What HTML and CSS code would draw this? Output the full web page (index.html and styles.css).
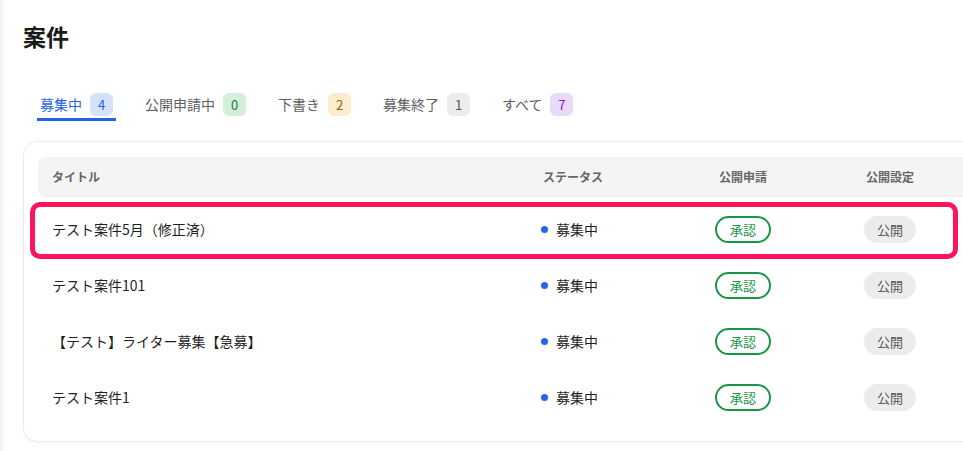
FILE: index.html
```html
<!DOCTYPE html>
<html lang="ja">
<head>
<meta charset="utf-8">
<link rel="stylesheet" href="styles.css">
</head>
<body>
<div class="page">
  <h1 class="title">案件</h1>
  <nav class="tabs">
    <div class="tab active"><span>募集中</span><span class="badge b-blue">4</span></div>
    <div class="tab"><span>公開申請中</span><span class="badge b-green">0</span></div>
    <div class="tab"><span>下書き</span><span class="badge b-orange">2</span></div>
    <div class="tab"><span>募集終了</span><span class="badge b-gray">1</span></div>
    <div class="tab"><span>すべて</span><span class="badge b-purple">7</span></div>
  </nav>
  <div class="card">
    <div class="table">
      <div class="row head">
        <div class="cell">タイトル</div>
        <div class="cell">ステータス</div>
        <div class="cell center">公開申請</div>
        <div class="cell center">公開設定</div>
      </div>
      <div class="row body-row marked">
        <div class="cell">テスト案件5月（修正済）</div>
        <div class="cell status"><span class="dot"></span>募集中</div>
        <div class="cell center"><span class="pill approve">承認</span></div>
        <div class="cell center"><span class="pill public">公開</span></div>
        <div class="highlight"></div>
      </div>
      <div class="row body-row">
        <div class="cell">テスト案件101</div>
        <div class="cell status"><span class="dot"></span>募集中</div>
        <div class="cell center"><span class="pill approve">承認</span></div>
        <div class="cell center"><span class="pill public">公開</span></div>
      </div>
      <div class="row body-row">
        <div class="cell">【テスト】ライター募集【急募】</div>
        <div class="cell status"><span class="dot"></span>募集中</div>
        <div class="cell center"><span class="pill approve">承認</span></div>
        <div class="cell center"><span class="pill public">公開</span></div>
      </div>
      <div class="row body-row">
        <div class="cell">テスト案件1</div>
        <div class="cell status"><span class="dot"></span>募集中</div>
        <div class="cell center"><span class="pill approve">承認</span></div>
        <div class="cell center"><span class="pill public">公開</span></div>
      </div>
    </div>
  </div>
</div>
</body>
</html>
```
FILE: styles.css
```css
html, body {
  margin: 0;
  padding: 0;
  background: #ffffff;
  overflow: hidden;
}
body {
  font-family: "Noto Sans CJK JP", "Noto Sans", sans-serif;
  color: #1f1f1f;
  width: 963px;
  height: 451px;
}
.page {
  border-left: 3px solid #f4f4f4;
  padding: 0 0 0 20px;
  height: 451px;
  box-sizing: border-box;
  width: 1100px;
}
.title {
  margin: 0;
  padding-top: 20px;
  font-size: 23px;
  line-height: 32px;
  font-weight: 700;
  color: #1a1a1a;
}
.tabs {
  display: flex;
  gap: 26px;
  margin-top: 38px;
  padding-left: 14px;
  height: 31px;
}
.tab {
  display: flex;
  align-items: center;
  gap: 8px;
  padding: 0 3px;
  font-size: 14px;
  color: #5f5f5f;
  height: 28px;
  border-bottom: 3px solid transparent;
}
.tab.active {
  color: #2563eb;
  border-bottom-color: #2563eb;
}
.badge {
  display: inline-flex;
  align-items: center;
  justify-content: center;
  width: 23px;
  height: 23px;
  border-radius: 6px;
  font-size: 13px;
}
.b-blue { background: #d5e2fc; color: #2563eb; }
.b-green { background: #d4eedb; color: #16803c; }
.b-orange { background: #fdebd0; color: #a15c07; }
.b-gray { background: #ececec; color: #555; }
.b-purple { background: #e8dbf7; color: #7e22ce; }

.card {
  margin-top: 20px;
  border: 1px solid #ebebeb;
  border-radius: 14px;
  padding: 15px 14px 16px 14px;
  box-shadow: 0 1px 3px rgba(0,0,0,0.04);
  background: #fff;
}
.table {
  display: flex;
  flex-direction: column;
}
.row {
  display: grid;
  grid-template-columns: 491px 141px 146px 148px;
  align-items: center;
  position: relative;
}
.head {
  height: 40px;
  background: #f4f4f4;
  border-radius: 8px;
  border-bottom: 1px solid #ededed;
  box-sizing: border-box;
  font-size: 12px;
  font-weight: 700;
  color: #666;
  margin-bottom: 4px;
}
.cell {
  padding: 0 14px;
  white-space: nowrap;
}
.cell.center {
  text-align: center;
  display: flex;
  justify-content: center;
}
.body-row {
  height: 56px;
  font-size: 14px;
  color: #1f1f1f;
}
.status {
  display: flex;
  align-items: center;
  gap: 8px;
  padding-left: 12px;
}
.dot {
  width: 7px;
  height: 7px;
  border-radius: 50%;
  background: #2563eb;
}
.pill {
  display: inline-flex;
  align-items: center;
  justify-content: center;
  height: 27px;
  border-radius: 14px;
  font-size: 13px;
  box-sizing: border-box;
}
.approve {
  width: 56px;
  border: 2px solid #1a9546;
  color: #1a9546;
}
.public {
  width: 52px;
  background: #ececec;
  color: #555;
}
.highlight {
  position: absolute;
  left: -8px;
  top: 1px;
  width: 928px;
  height: 57px;
  border: 5px solid #ff1459;
  border-radius: 10px;
  box-sizing: border-box;
  pointer-events: none;
}
```
